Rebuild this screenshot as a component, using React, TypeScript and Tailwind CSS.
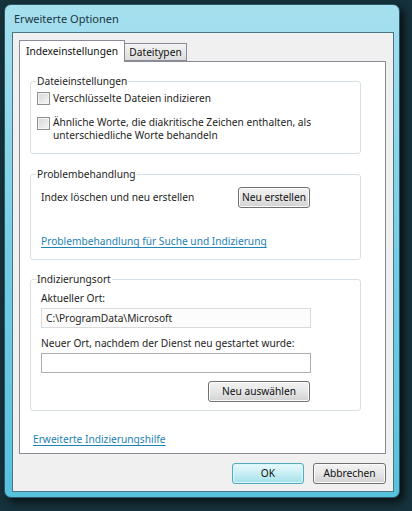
// Erweiterte Optionen — Vista-style indexing options dialog, tab "Indexeinstellungen".
import { type ReactNode } from "react";

const FONT = "font-['Noto_Sans','Open_Sans',sans-serif]";

function Group({ label, className, children }: { label: string; className?: string; children: ReactNode }) {
  return (
    <div className={`relative ml-[10px] w-[331px] rounded-[3px] border border-[#d5dfe5] ${className ?? ""}`}>
      <span className="absolute -top-[8px] left-[5px] bg-white px-[1px] leading-[14px] text-[#1e1e1e]">
        {label}
      </span>
      {children}
    </div>
  );
}

function Checkbox() {
  return (
    <span className="mt-px h-[13px] w-[13px] shrink-0 border border-[#8e8f8f] bg-gradient-to-br from-[#d6d6d6] to-[#f6f6f6] shadow-[inset_0_0_0_1px_#f4f4f4]" />
  );
}

function Button({ children, className, primary }: { children: ReactNode; className?: string; primary?: boolean }) {
  return (
    <button
      className={`flex h-[21px] items-center justify-center rounded-[3px] border text-[#111] ${
        primary
          ? "border-[#54a9bd] bg-gradient-to-b from-[#e9f9fb] via-[#c8eef4] to-[#a4e1ea] shadow-[inset_0_0_0_1px_#d9f6fa]"
          : "border-[#707070] bg-gradient-to-b from-[#f3f3f3] via-[#e6e6e6] to-[#d2d2d2] shadow-[inset_0_0_0_1px_#fbfbfb]"
      } ${className ?? ""}`}
    >
      {children}
    </button>
  );
}

export default function App() {
  return (
    <div className={`h-[511px] w-[412px] overflow-hidden bg-[#16323c] pl-[4px] pt-[4px] text-[10.2px] leading-[13px] ${FONT}`}>
      <div className="flex h-[494px] w-[396px] flex-col rounded-[7px] border border-[#2c5866] bg-gradient-to-b from-[#a6e0ef] via-[#74cde6] to-[#56c2de] px-[7px] pb-[5px] pr-[5px] shadow-[4px_4px_8px_rgba(0,0,0,0.7)]">
        <div className="flex h-[28px] items-center pl-[2px] text-[11px] text-[#1b3640]">Erweiterte Optionen</div>

        <div className="flex flex-1 flex-col border border-[#4a7684] bg-[#f0f0f0] px-[6px] pt-[7px] pb-[7px]">
          {/* tab strip */}
          <div className="flex h-[21px] items-end">
            <div className="relative z-10 -mb-px flex h-[22px] w-[106px] items-center justify-center border border-b-0 border-[#898c95] bg-white pb-[1px] text-[#111]">
              Indexeinstellungen
            </div>
            <div className="flex h-[18px] w-[62px] items-center justify-center border border-l-0 border-[#898c95] bg-gradient-to-b from-[#f4f4f4] to-[#dcdcdc] text-[#111]">
              Dateitypen
            </div>
          </div>

          {/* tab panel */}
          <div className="flex h-[393px] w-[367px] flex-col border border-[#898c95] bg-white text-[#1e1e1e]">
            <Group label="Dateieinstellungen" className="mt-[19px] h-[73px] pl-[6px] pt-[9px]">
              <div className="flex items-center gap-[3px]">
                <Checkbox />
                <span>Verschlüsselte Dateien indizieren</span>
              </div>
              <div className="mt-[11px] flex items-start gap-[3px]">
                <Checkbox />
                <span>
                  Ähnliche Worte, die diakritische Zeichen enthalten, als
                  <br />
                  unterschiedliche Worte behandeln
                </span>
              </div>
            </Group>

            <Group label="Problembehandlung" className="mt-[20px] h-[86px] pl-[10px] pt-[12px]">
              <div className="flex items-center">
                <span className="w-[197px]">Index löschen und neu erstellen</span>
                <Button className="w-[72px]">Neu erstellen</Button>
              </div>
              <a className="mt-[27px] block text-[#1e82b4] underline underline-offset-2">
                Problembehandlung für Suche und Indizierung
              </a>
            </Group>

            <Group label="Indizierungsort" className="mt-[19px] h-[132px] pl-[10px] pt-[12px]">
              <div>Aktueller Ort:</div>
              <div className="mt-[3px] flex h-[20px] w-[270px] items-center border border-[#dadada] bg-[#fcfcfc] px-[4px]">
                C:\ProgramData\Microsoft
              </div>
              <div className="mt-[9px]">Neuer Ort, nachdem der Dienst neu gestartet wurde:</div>
              <div className="mt-[3px] h-[20px] w-[270px] border border-[#abadb3] bg-white" />
              <div className="mt-[8px] flex w-[269px] justify-end">
                <Button className="w-[102px]">Neu auswählen</Button>
              </div>
            </Group>

            <a className="ml-[13px] mt-[22px] text-[#1e82b4] underline underline-offset-2">
              Erweiterte Indizierungshilfe
            </a>
          </div>

          {/* dialog buttons */}
          <div className="mt-[9px] flex justify-end gap-[9px] pr-[1px]">
            <Button primary className="w-[72px]">OK</Button>
            <Button className="w-[73px]">Abbrechen</Button>
          </div>
        </div>
      </div>
    </div>
  );
}
